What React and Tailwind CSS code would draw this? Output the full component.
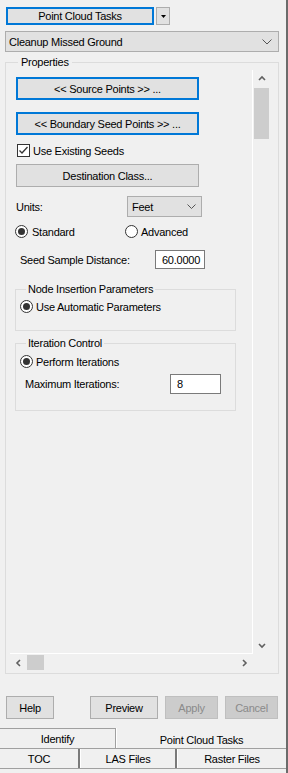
import React from "react";

const font = "font-[family-name:Liberation_Sans,Arial,sans-serif] text-[11px] tracking-[-0.25px] leading-[12px] text-black";

const Btn = ({ children, className = "", focused, disabled }) => {
  let look = "border border-[#adadad] bg-[#e1e1e1]";
  if (focused) look = "border-2 border-[#0078d7] bg-[#e1e1e1]";
  if (disabled) look = "border border-[#bfbfbf] bg-[#cccccc] text-[#8a8a8a]";
  return (
    <div className={`flex items-center justify-center h-[23px] ${look} ${className}`}>
      {children}
    </div>
  );
};

const Radio = ({ checked }) => (
  <div className="w-[13px] h-[13px] rounded-full border border-[#333333] bg-white flex items-center justify-center shrink-0">
    {checked && <div className="w-[7px] h-[7px] rounded-full bg-[#333333]" />}
  </div>
);

const Chevron = ({ dir, className = "" }) => {
  const paths = {
    up: "M1 5 L4 2 L7 5",
    down: "M1 2 L4 5 L7 2",
    left: "M5 1 L2 4 L5 7",
    right: "M2 1 L5 4 L2 7",
  };
  return (
    <svg width="8" height="8" viewBox="0 0 8 8" className={className}>
      <path d={paths[dir]} fill="none" stroke="#606060" strokeWidth="1.6" />
    </svg>
  );
};

const Group = ({ label, className = "", children }) => (
  <fieldset className={`border border-[#dcdcdc] ${className}`}>
    <legend className="ml-[6px] px-[2px] leading-[12px]">{label}</legend>
    {children}
  </fieldset>
);

export default function App() {
  return (
    <div className={`w-[288px] h-[773px] bg-[#f0f0f0] border-r-2 border-[#6b6b6b] overflow-hidden ${font}`}>
      {/* task selector */}
      <div className="flex pt-[7px] pl-[6px] gap-[2px]">
        <Btn focused className="w-[148px] !h-[18px]">Point Cloud Tasks</Btn>
        <div className="w-[14px] h-[18px] border border-[#adadad] bg-[#e1e1e1] flex items-center justify-center">
          <svg width="5" height="3" viewBox="0 0 5 3">
            <path d="M0 0 H5 L2.5 3 Z" fill="#000" />
          </svg>
        </div>
      </div>

      <div className="mt-[6px] ml-[5px] w-[274px] h-[21px] border border-[#adadad] bg-[#e1e1e1] flex items-center justify-between pl-[3px] pr-[6px]">
        <span>Cleanup Missed Ground</span>
        <svg width="10" height="6" viewBox="0 0 10 6">
          <path d="M0.5 0.5 L5 5 L9.5 0.5" fill="none" stroke="#555" strokeWidth="1" />
        </svg>
      </div>

      {/* properties */}
      <fieldset className="mt-[4px] ml-[5px] w-[274px] h-[618px] border border-[#dcdcdc] pt-[2px] pl-[4px]">
        <legend className="ml-[8px] px-[3px] leading-[12px]">Properties</legend>
        <div className="grid grid-cols-[243px_17px] grid-rows-[584px_17px]">
          <div className="border-r border-b border-white overflow-hidden">
            <div className="pl-[6px] pt-[7px]">
              <Btn focused className="w-[183px]">&lt;&lt; Source Points &gt;&gt; ...</Btn>
              <Btn focused className="w-[183px] mt-[12px]">&lt;&lt; Boundary Seed Points &gt;&gt; ...</Btn>
              <div className="flex items-center mt-[9px] h-[13px]">
                <div className="ml-[1px] w-[13px] h-[13px] border border-[#333333] bg-white flex items-center justify-center">
                  <svg width="11" height="11" viewBox="0 0 11 11">
                    <path d="M1.5 5.5 L4 8 L9.5 2" fill="none" stroke="#333" strokeWidth="1.3" />
                  </svg>
                </div>
                <span className="ml-[3px]">Use Existing Seeds</span>
              </div>
              <Btn className="w-[183px] mt-[7px]">Destination Class...</Btn>
              <div className="flex items-center mt-[9px] h-[21px]">
                <span className="w-[111px]">Units:</span>
                <div className="w-[75px] h-[21px] border border-[#adadad] bg-[#e1e1e1] flex items-center justify-between pl-[4px] pr-[5px]">
                  <span>Feet</span>
                  <svg width="9" height="5" viewBox="0 0 9 5">
                    <path d="M0.5 0.5 L4.5 4.5 L8.5 0.5" fill="none" stroke="#555" strokeWidth="1" />
                  </svg>
                </div>
              </div>
            </div>

            <div className="flex items-center mt-[8px] ml-[5px] h-[13px]">
              <div className="flex items-center w-[110px]">
                <Radio checked />
                <span className="ml-[4px]">Standard</span>
              </div>
              <Radio />
              <span className="ml-[3px]">Advanced</span>
            </div>

            <div className="flex items-center mt-[12px] ml-[10px] h-[19px]">
              <span className="w-[135px]">Seed Sample Distance:</span>
              <div className="w-[50px] h-[19px] border border-[#7a7a7a] bg-white flex items-center justify-end pr-[4px]">
                60.0000
              </div>
            </div>

            <Group label="Node Insertion Parameters" className="mt-[14px] ml-[5px] w-[221px] h-[48px] pt-[5px] pl-[4px]">
              <div className="flex items-center h-[13px]">
                <Radio checked />
                <span className="ml-[3px]">Use Automatic Parameters</span>
              </div>
            </Group>

            <Group label="Iteration Control" className="mt-[6px] ml-[5px] w-[221px] h-[74px] pt-[6px] pl-[4px]">
              <div className="flex items-center h-[13px]">
                <Radio checked />
                <span className="ml-[3px]">Perform Iterations</span>
              </div>
              <div className="flex items-center mt-[6px] h-[20px]">
                <span className="ml-[5px] w-[145px]">Maximum Iterations:</span>
                <div className="w-[51px] h-[20px] border border-[#7a7a7a] bg-white flex items-center pl-[6px]">
                  8
                </div>
              </div>
            </Group>
          </div>

          {/* vertical scrollbar */}
          <div className="flex flex-col items-center">
            <div className="h-[17px] flex items-center justify-center">
              <Chevron dir="up" />
            </div>
            <div className="mt-[1px] w-[15px] h-[51px] bg-[#cdcdcd]" />
            <div className="flex-1" />
            <div className="h-[17px] flex items-center justify-center">
              <Chevron dir="down" />
            </div>
          </div>

          {/* horizontal scrollbar */}
          <div className="flex items-center">
            <div className="w-[17px] flex items-center justify-center">
              <Chevron dir="left" />
            </div>
            <div className="w-[17px] h-[15px] bg-[#cdcdcd]" />
            <div className="flex-1" />
            <div className="w-[17px] flex items-center justify-center">
              <Chevron dir="right" />
            </div>
          </div>
          <div />
        </div>
      </fieldset>

      {/* action buttons */}
      <div className="flex mt-[22px]">
        <Btn className="ml-[6px] w-[48px]">Help</Btn>
        <Btn className="ml-[36px] w-[68px]">Preview</Btn>
        <Btn disabled className="ml-[7px] w-[53px]">Apply</Btn>
        <Btn disabled className="ml-[7px] w-[53px]">Cancel</Btn>
      </div>

      {/* tabs */}
      <div className="mt-[9px] flex h-[20px]">
        <div className="w-[116px] border-t border-r border-[#a0a0a0] flex items-center justify-center">
          Identify
        </div>
        <div className="flex-1 border-l border-white flex items-end justify-center pb-[2px]">
          Point Cloud Tasks
        </div>
      </div>
      <div className="flex h-[21px] border-t border-b border-[#a0a0a0]">
        <div className="w-[80px] border-r-2 border-[#7a7a7a] flex items-center justify-center">TOC</div>
        <div className="w-[97px] border-l border-white border-r-2 border-r-[#7a7a7a] flex items-center justify-center">
          LAS Files
        </div>
        <div className="flex-1 border-l border-white flex items-center justify-center">Raster Files</div>
      </div>
    </div>
  );
}
